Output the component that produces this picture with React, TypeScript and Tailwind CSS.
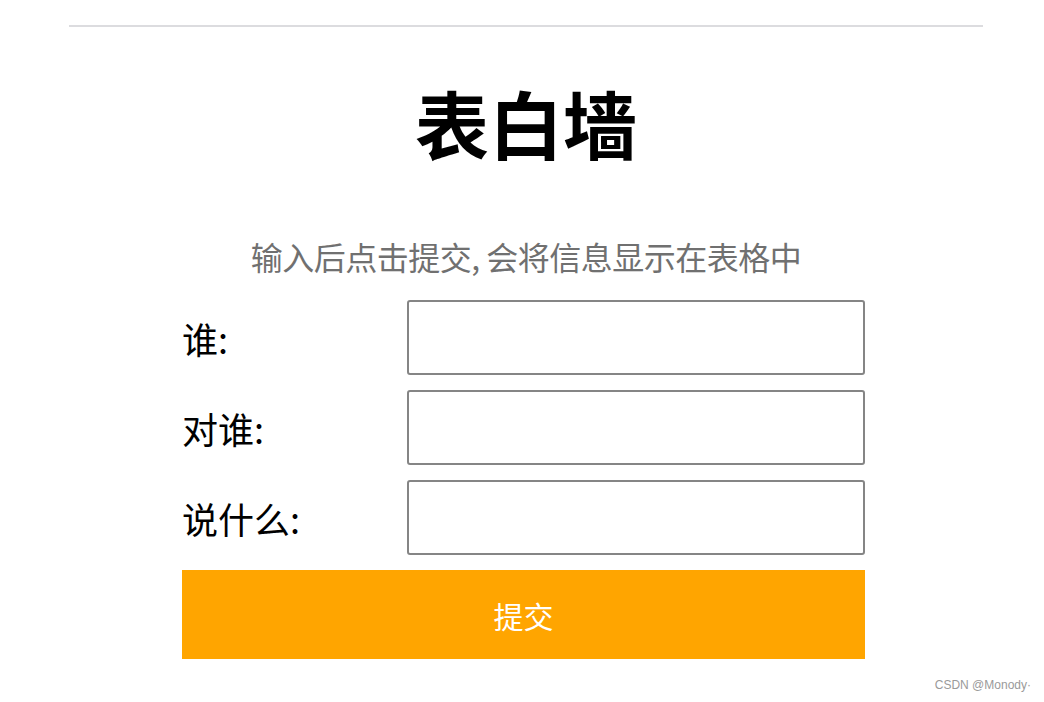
import React from "react";

const cjk = "font-['Microsoft_YaHei','Noto_Sans_CJK_SC',sans-serif]";

const rows = ["谁:", "对谁:", "说什么:"];

export default function App() {
  return (
    <div className={`relative w-[1044px] h-[702px] bg-white overflow-hidden ${cjk}`}>
      <div className="ml-[69px] mt-[25px] w-[914px] h-[2px] bg-[#dcdcdf]"></div>

      <h1 className="mt-[58px] ml-[69px] w-[914px] text-center text-[74px] leading-none font-bold text-black">
        表白墙
      </h1>

      <p className="mt-[81px] ml-[69px] w-[914px] text-center text-[32px] leading-none tracking-[-0.5px] text-[#707070]">
        输入后点击提交, 会将信息显示在表格中
      </p>

      <form className="ml-[182px] mt-[28px] w-[683px] flex flex-col gap-[15px]">
        {rows.map((label) => (
          <div key={label} className="flex items-center h-[75px]">
            <span className="w-[225px] text-[36px] leading-none text-black">{label}</span>
            <input
              type="text"
              className="w-[458px] h-[75px] border-2 border-[#858585] rounded-[3px] bg-white outline-none"
            />
          </div>
        ))}
        <button
          type="button"
          className="h-[89px] w-full bg-[#ffa500] text-white text-[30px] leading-none"
        >
          提交
        </button>
      </form>

      <div className="absolute right-[13px] top-[679px] text-[12px] leading-none text-[#9a9a9a] font-['Liberation_Sans',Arial,sans-serif]">
        CSDN @Monody·
      </div>
    </div>
  );
}
